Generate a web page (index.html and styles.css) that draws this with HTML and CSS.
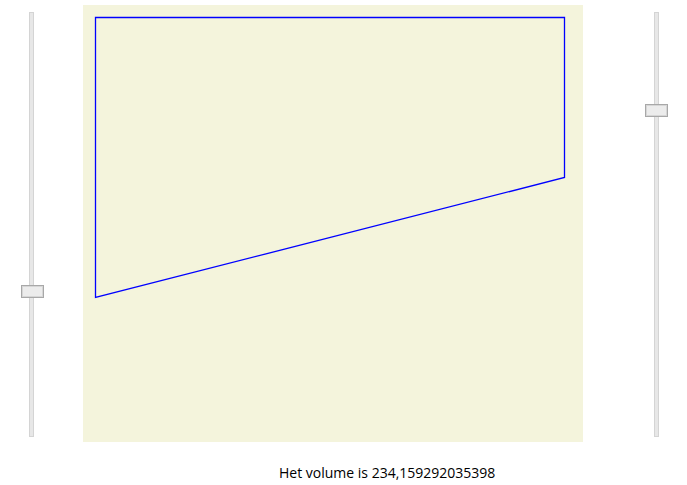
FILE: index.html
```html
<!DOCTYPE html>
<html>
<head>
<meta charset="utf-8">
<link rel="stylesheet" href="styles.css">
</head>
<body>
<div class="row">
  <div class="slider slider-left">
    <div class="track"></div>
    <div class="thumb" style="top:273px"></div>
  </div>
  <div class="canvas">
    <svg width="500" height="437" viewBox="0 0 500 437">
      <polygon points="12.5,12.5 481.5,12.5 481.5,172.5 12.5,292.5" fill="none" stroke="#0000ff" stroke-width="1.3"/>
    </svg>
  </div>
  <div class="slider slider-right">
    <div class="track"></div>
    <div class="thumb" style="top:92px"></div>
  </div>
</div>
<div class="result">Het volume is 234,159292035398</div>
</body>
</html>
```
FILE: styles.css
```css
html, body {
  margin: 0;
  padding: 0;
  background: #ffffff;
}
body {
  font-family: "Open Sans", "Noto Sans", sans-serif;
  color: #000;
}
.row {
  display: flex;
  align-items: flex-start;
  padding-top: 5px;
}
.slider {
  position: relative;
  width: 23px;
  height: 425px;
  margin-top: 7px;
}
.slider-left {
  margin-left: 21px;
  margin-right: 39px;
}
.slider-right {
  margin-left: 62px;
}
.track {
  box-sizing: border-box;
  width: 5px;
  height: 100%;
  background: #e7e7e7;
  border: 1px solid #d4d4d4;
}
.slider-left .track { margin-left: 8px; }
.slider-right .track { margin-left: 9px; }
.thumb {
  position: absolute;
  left: 0;
  box-sizing: border-box;
  width: 23px;
  height: 13px;
  background: #ececec;
  border: 1px solid #a8a8a8;
  box-shadow: inset 0 0 0 1px #d6d6d6;
}
.canvas {
  width: 500px;
  height: 437px;
  background: #f4f4dc;
}
.canvas svg {
  display: block;
}
.result {
  margin-left: 279px;
  margin-top: 21px;
  font-size: 14px;
  line-height: 20px;
}
```
